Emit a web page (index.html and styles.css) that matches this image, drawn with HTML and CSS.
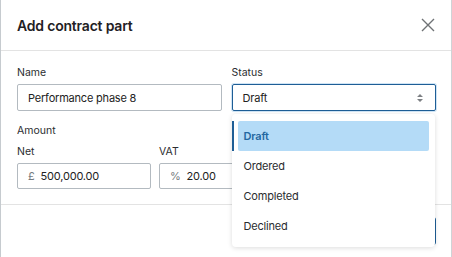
FILE: index.html
```html
<!DOCTYPE html>
<html lang="en">
<head>
  <meta charset="UTF-8">
  <title>Add contract part</title>
  <link rel="stylesheet" href="styles.css">
</head>
<body>

<div class="modal">
  <header class="modal-header">
    <h2>Add contract part</h2>
    <button class="close" aria-label="Close">
      <svg width="14" height="14" viewBox="0 0 14 14"><path d="M1 1 L13 13 M13 1 L1 13" stroke="#6f7275" stroke-width="1.4" fill="none"/></svg>
    </button>
  </header>

  <div class="modal-body">
    <div class="row">
      <div class="field">
        <label>Name</label>
        <div class="input">Performance phase 8</div>
      </div>
      <div class="field status">
        <label>Status</label>
        <div class="input select">
          <span>Draft</span>
          <svg width="8" height="12" viewBox="0 0 8 12"><path d="M4 2 L7 5 L1 5 Z M4 10 L7 7 L1 7 Z" fill="#7d8084"/></svg>
        </div>
        <!-- open menu -->
        <ul class="menu">
          <li class="active">Draft</li>
          <li>Ordered</li>
          <li>Completed</li>
          <li>Declined</li>
        </ul>
      </div>
    </div>

    <div class="group-label">Amount</div>
    <div class="row amounts">
      <div class="field net">
        <label>Net</label>
        <div class="input"><span class="prefix">£</span>500,000.00</div>
      </div>
      <div class="field vat">
        <label>VAT</label>
        <div class="input"><span class="prefix">%</span>20.00</div>
      </div>
    </div>
  </div>

  <footer class="modal-footer">
    <button class="primary">Save</button>
  </footer>
</div>

</body>
</html>
```

FILE: styles.css
```css
body {
  margin: 0;
  font-family: Inter, "Noto Sans", sans-serif;
  color: #222;
  background-color: #fff;
}

.modal {
  height: 257px;
  border-left: 1px solid #c6cbcf;
  border-right: 1px solid #cfd3d6;
  overflow: hidden;
}

.modal-header {
  display: flex;
  justify-content: space-between;
  align-items: center;
  height: 50px;
  padding: 0 16px;
  border-bottom: 1px solid #e3e3e3;
}

.modal-header h2 {
  margin: 0;
  font-size: 14px;
  font-weight: 600;
  letter-spacing: -0.2px;
  color: #1f2124;
}

.close {
  background: none;
  border: none;
  padding: 0;
  display: flex;
}

.modal-body {
  padding: 14px 15px 15px 16px;
  border-bottom: 1px solid #e3e3e3;
}

.row {
  display: flex;
  gap: 10px;
}

.field {
  flex: 1;
}

label, .group-label {
  display: block;
  font-size: 10.5px;
  line-height: 16px;
  color: #2b2d30;
  margin-bottom: 3px;
}

.group-label {
  margin-top: 12px;
  margin-bottom: 5px;
}

.input {
  display: flex;
  align-items: center;
  height: 27px;
  box-sizing: border-box;
  border: 1px solid #b3bac0;
  border-radius: 2px;
  padding: 0 10px;
  font-size: 11px;
  letter-spacing: -0.2px;
  color: #222;
}

.select {
  justify-content: space-between;
  border-color: #1e5e96;
  box-shadow: 0 0 0 1px #cfe4f5;
  padding-right: 11px;
}

.status {
  position: relative;
}

.prefix {
  color: #777b80;
  margin-right: 6px;
}

.amounts {
  gap: 8px;
}

.amounts .input {
  height: 26px;
}

.net, .vat {
  flex: 0 0 134px;
}

.menu {
  position: absolute;
  left: 0;
  top: 49px;
  width: 203px;
  margin: 0;
  padding: 7px 6px 6px 6px;
  box-sizing: border-box;
  list-style: none;
  background-color: #fff;
  border-radius: 4px;
  box-shadow: 0 1px 5px rgba(0,0,0,0.14);
  z-index: 2;
}

.menu li {
  height: 30px;
  line-height: 30px;
  padding-left: 6px;
  font-size: 11px;
  letter-spacing: -0.2px;
  color: #2a2c2f;
  border-radius: 2px;
}

.menu li.active {
  position: relative;
  background-color: #b4dbf7;
  color: #2467a1;
  font-weight: 600;
}

.menu li.active::before {
  content: "";
  position: absolute;
  left: -6px;
  top: 0;
  width: 2px;
  height: 30px;
  background-color: #1e5e96;
}

.modal-footer {
  display: flex;
  justify-content: flex-end;
  padding: 12px 15px;
}

.primary {
  height: 28px;
  padding: 0 16px;
  border: none;
  border-radius: 3px;
  background-color: #1e5e96;
  color: white;
  font-family: inherit;
  font-size: 11px;
}
```
